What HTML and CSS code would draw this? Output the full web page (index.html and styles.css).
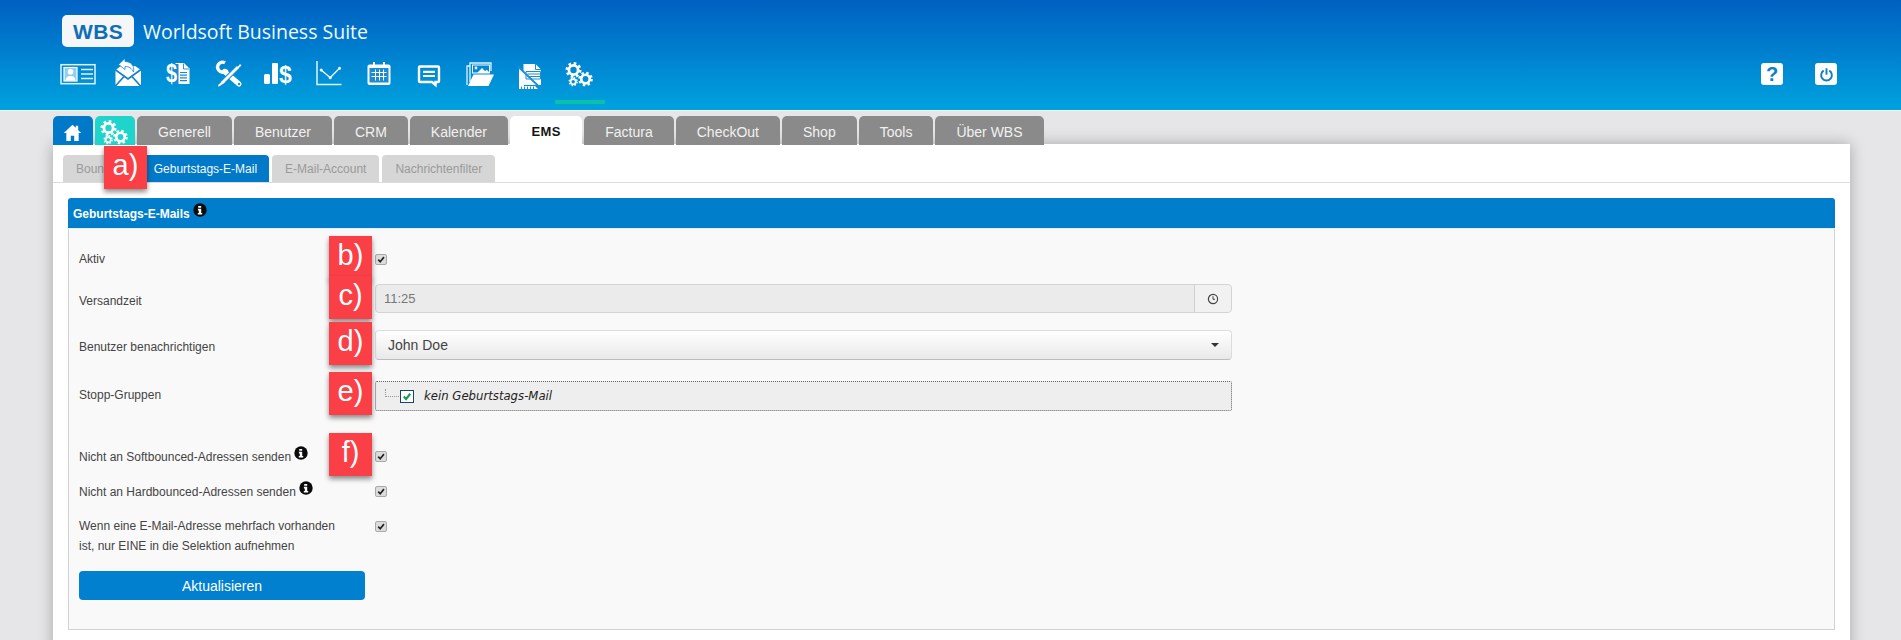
FILE: index.html
```html
<!DOCTYPE html>
<html lang="de">
<head>
<meta charset="utf-8">
<title>Worldsoft Business Suite</title>
<link rel="stylesheet" href="styles.css">
</head>
<body>
<svg class="defs" width="0" height="0" aria-hidden="true">
  <symbol id="gears" viewBox="0 0 36 36">
    <g fill="none" stroke="currentColor">
      <circle cx="11.5" cy="14" r="4.6" stroke-width="2.8"/>
      <circle cx="11.5" cy="14" r="6.6" stroke-width="2.8" stroke-dasharray="2.6 2.58"/>
      <circle cx="23.5" cy="23" r="4.2" stroke-width="2.6"/>
      <circle cx="23.5" cy="23" r="6" stroke-width="2.6" stroke-dasharray="2.36 2.35"/>
      <circle cx="11.2" cy="25.7" r="2.6" stroke-width="1.7"/>
      <circle cx="11.2" cy="25.7" r="3.8" stroke-width="1.7" stroke-dasharray="1.5 1.49"/>
    </g>
  </symbol>
  <symbol id="tick" viewBox="0 0 12 11">
    <path d="M2.6 5.6 L5 8.2 L9.6 2.6" fill="none" stroke="#222" stroke-width="2"/>
  </symbol>
  <symbol id="info" viewBox="0 0 14 14">
    <circle cx="7" cy="7" r="6.7" fill="#0b0b0b"/>
    <path d="M5.2 2.9h3v1.9h-3zM4.9 5.8h3.3v4.1h1v1.6H4.8V9.9h1V7.4h-.9z" fill="#fff"/>
  </symbol>
</svg>

<header class="top">
  <div class="brand">
    <div class="logo">WBS</div>
    <div class="brand-name">Worldsoft Business Suite</div>
  </div>
  <div class="toolbar">
    <nav class="modules">
      <a class="module">
        <svg class="mi" viewBox="0 0 36 36"><rect x="1" y="8.7" width="34" height="19" fill="none" stroke="#dff3fc" stroke-width="1.5"/><rect x="4" y="11.5" width="13" height="13.5" fill="#8fd0f0" stroke="#fff" stroke-width="1.2"/><circle cx="10.5" cy="15.8" r="2.8" fill="#fff"/><path d="M5.5 24.5c.5-4 3-4.500 5-4.500s4.500.5 5 4.500z" fill="#fff"/><path d="M21 13.500h12M21 18h12M21 22.500h12" stroke="#dff3fc" stroke-width="1.700"/></svg>
      </a>
      <a class="module">
        <svg class="mi" viewBox="0 0 36 36"><path d="M5.500 14 11 10H25L31 14V30H5.500z" fill="#fff"/><path d="M5 13.500 18 23 31 13.500M5 30.500 14.500 20M31 30.500 21.500 20" fill="none" stroke="#1483cc" stroke-width="1.700"/><path d="M15 2.500 8.500 8.500 15 13.500v-3c4 0 6.500 1.300 8.500 5.500 1.500-6.500-3-10.500-8.500-10.500z" fill="#fff" stroke="#1483cc" stroke-width=".8"/></svg>
      </a>
      <a class="module">
        <svg class="mi" viewBox="0 0 36 36"><path d="M15.500 7h8.500l5.500 5.500V28H15.500z" fill="#fff"/><path d="M23.500 7.500v5.500H29" fill="none" stroke="#1889d0" stroke-width=".9"/><path d="M20 16.500h7M20 19.200h7M20 21.900h7M20 24.600h7" stroke="#1889d0" stroke-width="1.200"/><path d="M14 8h4.500v20H14z" fill="#1889d0"/><text class="dollar doc-dollar" transform="translate(6 26) scale(.8 1)">$</text></svg>
      </a>
      <a class="module">
        <svg class="mi" viewBox="0 0 36 36"><path d="M14 6.800A5 5 0 1 0 16 13.500" fill="none" stroke="#fff" stroke-width="3.400"/><path d="M13.500 15.500 28 28" stroke="#fff" stroke-width="5" stroke-linecap="round"/><circle cx="28" cy="28" r="1.200" fill="#1b8fd6"/><path d="M27 11 9.500 28.500" stroke="#1b8dd4" stroke-width="5"/><path d="M27 11 11 27" stroke="#fff" stroke-width="2.800"/><path d="M25.500 12.500 29 8l1.500 1.500-4 3.500zM12.500 24.500l1.500 1.500-5 4-2 .5.500-2z" fill="#fff"/></svg>
      </a>
      <a class="module">
        <svg class="mi" viewBox="0 0 36 36"><rect x="3" y="18" width="6" height="10" rx="1.500" fill="#fff"/><rect x="11" y="7" width="6" height="21" rx="1" fill="#fff"/><text class="dollar" x="18" y="27">$</text></svg>
      </a>
      <a class="module">
        <svg class="mi" viewBox="0 0 36 36"><path d="M6 5v23.500h24.500" fill="none" stroke="#dff3fc" stroke-width="1.500"/><path d="M10.200 14l9 7.700 9.300-9.400" fill="none" stroke="#fff" stroke-width="1.300"/><circle cx="10.200" cy="14" r="1.500" fill="#fff"/><circle cx="19.200" cy="21.700" r="1.500" fill="#fff"/><circle cx="28.500" cy="12.300" r="1.500" fill="#fff"/></svg>
      </a>
      <a class="module">
        <svg class="mi" viewBox="0 0 36 36"><path d="M8.500 8.500h19a2 2 0 0 1 2 2V27a2 2 0 0 1-2 2h-19a2 2 0 0 1-2-2V10.500a2 2 0 0 1 2-2z" fill="#fff"/><rect x="8.500" y="12" width="19" height="14.500" fill="#1b8bd2"/><path d="M13 6v4.500M23 6v4.500" stroke="#fff" stroke-width="2"/><path d="M10.500 16.500h15M10.500 20.500h15M14.500 13.500v11M18.500 13.500v11M22.500 13.500v11" stroke="#fff" stroke-width="1"/></svg>
      </a>
      <a class="module">
        <svg class="mi" viewBox="0 0 36 36"><path d="M9 10.500h18a1 1 0 0 1 1 1V25a1 1 0 0 1-1 1h-2.500v3l-3.500-3H9a1 1 0 0 1-1-1V11.500a1 1 0 0 1 1-1z" fill="none" stroke="#fff" stroke-width="2.400"/><path d="M12 15.800h12M12 20h12" stroke="#fff" stroke-width="2.200"/></svg>
      </a>
      <a class="module">
        <svg class="mi" viewBox="0 0 36 36"><path d="M5 29V10h3M8 26V7h21v8" fill="none" stroke="#dff3fc" stroke-width="1.300"/><rect x="10.500" y="9" width="17" height="8" fill="none" stroke="#fff" stroke-width="1"/><circle cx="14" cy="12" r="1.400" fill="#fff"/><path d="M15 17l5-5 3 3 2-1 3 3z" fill="#fff"/><path d="M11.500 18.500H32l-5.500 11.500H6z" fill="#fff"/></svg>
      </a>
      <a class="module">
        <svg class="mi" viewBox="0 0 36 36"><path d="M11.500 8H23.500L29 13.500V29H11.500z" fill="#fff"/><path d="M7 12V33H26L23 30H12V17z" fill="#fff"/><path d="M23.500 8v5.500H29" fill="none" stroke="#1b8fd6" stroke-width="1"/><path d="M14 15.500h14.500v7.500H14z" fill="#fff" stroke="#1b8fd6" stroke-width="1"/><path d="M15.500 18h13M15.500 20.500h13" stroke="#1b8fd6" stroke-width="1"/><path d="M6 10.500 29.500 33" stroke="#1b8fd6" stroke-width="1.800"/><path d="M9.500 33v-2.500M12.500 33v-2.500M15.500 33v-2.500M18.500 33v-2.500M21.500 33v-2.500" stroke="#1b8fd6" stroke-width="1"/></svg>
      </a>
      <a class="module is-active">
        <svg class="mi"><use href="#gears"/></svg>
      </a>
    </nav>
    <div class="top-actions">
      <span class="action"><span class="action-q">?</span></span>
      <span class="action">
        <svg class="power" viewBox="0 0 14 14"><path d="M4.400 3.400a5 5 0 1 0 5.200 0" fill="none" stroke="#0f7fc8" stroke-width="1.800"/><path d="M7 1.200v6" stroke="#0f7fc8" stroke-width="1.800"/></svg>
      </span>
    </div>
  </div>
</header>

<div class="tabs">
  <a class="tab tab-home">
    <svg class="home" viewBox="0 0 20 20"><path d="M10 1.800 0.800 10.500h2.700V19h4.700v-5.500h3.600V19h4.700v-8.500h2.700L16 7.500V2.800h-2.500v2.300z" fill="#fff"/></svg>
  </a>
  <a class="tab tab-gear"><svg class="tab-gear-icon"><use href="#gears"/></svg></a>
  <a class="tab">Generell</a>
  <a class="tab">Benutzer</a>
  <a class="tab">CRM</a>
  <a class="tab">Kalender</a>
  <a class="tab is-current">EMS</a>
  <a class="tab">Factura</a>
  <a class="tab">CheckOut</a>
  <a class="tab">Shop</a>
  <a class="tab">Tools</a>
  <a class="tab">Über WBS</a>
</div>

<main class="panel">
  <div class="subtabs">
    <a class="subtab subtab-first">Bounces</a>
    <a class="subtab is-current">Geburtstags-E-Mail</a>
    <a class="subtab">E-Mail-Account</a>
    <a class="subtab">Nachrichtenfilter</a>
  </div>

  <section class="card">
    <h2 class="card-head">Geburtstags-E-Mails <svg class="info info-head"><use href="#info"/></svg></h2>
    <form class="card-body">
      <div class="row row-aktiv">
        <label class="lbl">Aktiv</label>
        <span class="check"><svg><use href="#tick"/></svg></span>
      </div>
      <div class="row row-time">
        <label class="lbl lbl-low">Versandzeit</label>
        <div class="field field-time">
          <span class="time-value">11:25</span>
          <span class="time-addon">
            <svg class="clock" viewBox="0 0 12 12"><circle cx="6" cy="6" r="4.600" fill="none" stroke="#444" stroke-width="1.200"/><path d="M6 3.200V6.300H8" fill="none" stroke="#444" stroke-width="1"/></svg>
          </span>
        </div>
      </div>
      <div class="row row-select">
        <label class="lbl lbl-low">Benutzer benachrichtigen</label>
        <div class="field field-select">
          <span>John Doe</span>
          <span class="caret"></span>
        </div>
      </div>
      <div class="row row-tree">
        <label class="lbl lbl-high">Stopp-Gruppen</label>
        <div class="field field-tree">
          <span class="tree-line"></span>
          <span class="tree-check">
            <svg viewBox="0 0 12 12"><path d="M2.500 6 5 8.800 9.500 3" fill="none" stroke="#1f9a4a" stroke-width="2.400"/></svg>
          </span>
          <span class="tree-label">kein Geburtstags-Mail</span>
        </div>
      </div>
      <div class="row row-soft">
        <label class="lbl">Nicht an Softbounced-Adressen senden <svg class="info"><use href="#info"/></svg></label>
        <span class="check"><svg><use href="#tick"/></svg></span>
      </div>
      <div class="row row-hard">
        <label class="lbl">Nicht an Hardbounced-Adressen senden <svg class="info"><use href="#info"/></svg></label>
        <span class="check"><svg><use href="#tick"/></svg></span>
      </div>
      <div class="row row-multi">
        <label class="lbl">Wenn eine E-Mail-Adresse mehrfach vorhanden<br>ist, nur EINE in die Selektion aufnehmen</label>
        <span class="check"><svg><use href="#tick"/></svg></span>
      </div>
      <button class="submit" type="button">Aktualisieren</button>
    </form>
  </section>

  <span class="badge badge-a">a)</span>
  <span class="badge badge-b">b)</span>
  <span class="badge badge-c">c)</span>
  <span class="badge badge-d">d)</span>
  <span class="badge badge-e">e)</span>
  <span class="badge badge-f">f)</span>
</main>
</body>
</html>
```
FILE: styles.css
```css
* { box-sizing: border-box; }
html, body { margin: 0; height: 640px; overflow: hidden; }
body {
  background: #e6e5e7;
  font-family: "Liberation Sans", Arial, sans-serif;
  color: #333;
}
.defs { position: absolute; }

/* header */
.top {
  height: 111px;
  padding-top: 15px;
  background: linear-gradient(#0060c1 0%, #00a2de 100%);
  border-bottom: 1px solid #f4f4f4;
}
.brand { display: flex; align-items: center; margin-left: 62px; height: 32px; }
.logo {
  width: 72px;
  height: 32px;
  border-radius: 5px;
  background: #f4f6f8;
  color: #0e6fb6;
  font-size: 21px;
  font-weight: 700;
  line-height: 33px;
  text-align: center;
  letter-spacing: .3px;
}
.brand-name {
  margin-left: 9px;
  color: #f2f9fd;
  font-family: "Open Sans", sans-serif;
  font-size: 19.5px;
}
.toolbar { display: flex; margin-top: 9px; padding-left: 53px; }
.modules { display: flex; }
.module {
  position: relative;
  display: flex;
  justify-content: center;
  width: 50.2px;
  height: 48px;
}
.mi { width: 36px; height: 36px; color: #fff; }
.module.is-active::after {
  content: "";
  position: absolute;
  left: 0;
  right: 0;
  bottom: 0;
  height: 4px;
  background: #0bc0aa;
}
.dollar { fill: #fff; font-family: "Liberation Sans", sans-serif; font-weight: 700; font-size: 23px; }
.doc-dollar { font-size: 25px; }
.top-actions { display: flex; gap: 32px; margin-left: auto; margin-right: 64px; padding-top: 7px; }
.action {
  display: flex;
  align-items: center;
  justify-content: center;
  width: 22px;
  height: 22px;
  border-radius: 3px;
  background: #fff;
}
.action-q { color: #0f7fc8; font-size: 20px; font-weight: 700; line-height: 22px; }
.power { width: 15px; height: 15px; }

/* main tabs */
.tabs {
  position: relative;
  z-index: 2;
  display: flex;
  gap: 2px;
  height: 29px;
  margin: 5px 0 0 53px;
}
.tab {
  display: flex;
  align-items: center;
  padding: 2px 21px 0;
  border-radius: 5px 5px 0 0;
  background: #8b8a8a;
  color: #f1f1f1;
  font-size: 14px;
}
.tab.is-current {
  padding: 2px 21.500px 0;
  background: #fff;
  color: #151515;
  font-size: 13px;
  font-weight: 700;
  letter-spacing: .4px;
}
.tab-home { justify-content: center; width: 40px; padding: 0; background: #0079c8; }
.home { width: 19px; height: 19px; margin: 3px 2px 0 0; }
.tab-gear { justify-content: center; width: 40px; padding: 0; background: #1fd4cb; }
.tab-gear-icon { width: 36px; height: 36px; margin-top: 2px; color: #fff; flex: none; }

/* panel */
.panel {
  position: relative;
  width: 1797px;
  height: 520px;
  margin: -1px 0 0 53px;
  padding: 10px 15px 0;
  background: #fff;
  box-shadow: 0 0 14px rgba(0, 0, 0, .28);
}
.subtabs {
  display: flex;
  gap: 3px;
  height: 28px;
  margin: 1px -15px 0;
  padding-left: 10px;
  border-bottom: 1px solid #dcdcdc;
}
.subtab {
  display: flex;
  align-items: center;
  height: 27px;
  padding: 0 13px;
  border-radius: 4px 4px 0 0;
  background: #d6d6d6;
  color: #9a9a9a;
  font-size: 12px;
}
.subtab-first { padding-right: 16px; }
.subtab.is-current { padding: 0 12px; background: #0079c8; color: #f4f9fc; }

.card { margin-top: 15px; }
.card-head {
  display: flex;
  align-items: flex-start;
  gap: 3px;
  height: 31px;
  margin: 0;
  padding: 9px 0 0 5px;
  border-radius: 3px 3px 0 0;
  border-bottom: 1px solid #e4eef5;
  background: #007dcb;
  color: #fff;
  font-size: 12px;
  font-weight: 700;
}
.info { width: 14px; height: 14px; vertical-align: 1px; }
.info-head { margin-top: -4px; }
.card-body {
  height: 401px;
  padding: 15px 0 0 10px;
  background: #f9f9f9;
  border: 1px solid #d2d2d2;
  border-top: 0;
}
.row { display: flex; align-items: center; height: 30px; }
.row-time { margin-top: 10px; }
.row-select { margin-top: 16px; }
.row-tree { margin-top: 21px; }
.row-soft { margin-top: 30px; }
.row-hard { margin-top: 5px; }
.row-multi { align-items: flex-start; height: 40px; margin-top: 10px; }
.lbl {
  flex: none;
  width: 296px;
  color: #444;
  font-size: 12px;
  line-height: 20px;
}
.lbl-low { padding-top: 4px; }
.lbl-high { padding-bottom: 2px; }
.check {
  display: block;
  width: 12px;
  height: 11px;
  margin-top: 1px;
  border: 1px solid #a9a9a9;
  border-radius: 2px;
  background: #dcdcdc;
}
.row-multi .check { margin-top: 5px; }
.check svg { display: block; width: 10px; height: 9px; }

.field {
  display: flex;
  align-items: center;
  width: 857px;
  height: 30px;
  border-radius: 4px;
}
.field-time {
  height: 29px;
  margin-bottom: 1px;
  border: 1px solid #d4d4d4;
  background: #ebebeb;
  color: #777;
  font-size: 13px;
}
.time-value { flex: 1; padding-left: 8px; }
.time-addon {
  display: flex;
  align-items: center;
  justify-content: center;
  width: 37px;
  height: 100%;
  border-left: 1px solid #cfcfcf;
  background: #f1f1f1;
  border-radius: 0 4px 4px 0;
}
.clock { width: 12px; height: 12px; }
.field-select {
  justify-content: space-between;
  padding: 0 12px;
  border: 1px solid #ddd;
  border-bottom-color: #bdbdbd;
  background: linear-gradient(#fff, #e9e9e9);
  color: #444;
  font-size: 14px;
}
.caret {
  width: 0;
  height: 0;
  border: 4px solid transparent;
  border-top: 4px solid #333;
  border-bottom: 0;
}
.field-tree {
  border: 1px dotted #666;
  border-radius: 2px;
  background: #eeeeee;
  height: 30px;
}
.tree-line {
  width: 14px;
  height: 8px;
  margin: -6px 1px 0 9px;
  border-left: 1px dotted #999;
  border-bottom: 1px dotted #999;
}
.tree-check {
  display: block;
  width: 14px;
  height: 13px;
  border: 1px solid #17476e;
  background: #fff;
}
.tree-check svg { display: block; width: 12px; height: 11px; }
.tree-label {
  margin-left: 10px;
  color: #222;
  font-family: "DejaVu Sans", sans-serif;
  font-size: 11.7px;
  font-style: italic;
}
.submit {
  display: block;
  width: 286px;
  height: 29px;
  margin-top: 15px;
  padding: 0;
  border: 0;
  border-radius: 4px;
  background: #0080cf;
  color: #fff;
  font-family: "Liberation Sans", sans-serif;
  font-size: 14px;
}

/* callout badges */
.badge {
  position: absolute;
  z-index: 3;
  width: 43px;
  height: 43px;
  background: #fb3f46;
  box-shadow: 0 3px 5px rgba(0, 0, 0, .45);
  color: #fff;
  font-size: 29px;
  line-height: 39px;
  text-align: center;
}
.badge-a { left: 51px; top: 2px; }
.badge-b { left: 276px; top: 92px; }
.badge-c { left: 276px; top: 132px; }
.badge-d { left: 276px; top: 178px; }
.badge-e { left: 276px; top: 228px; }
.badge-f { left: 276px; top: 289px; }
```
